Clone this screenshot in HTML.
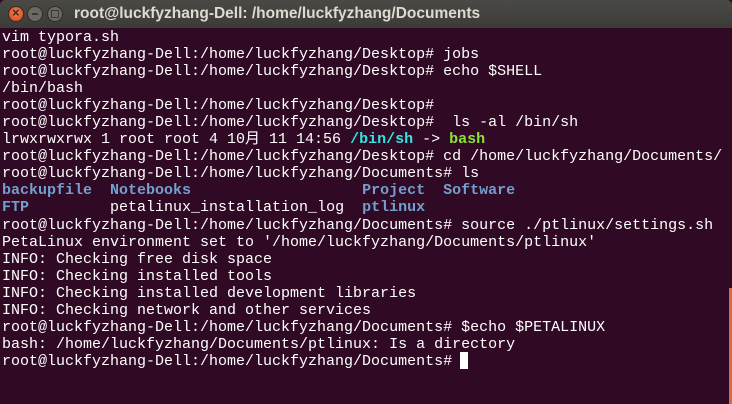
<!DOCTYPE html>
<html><head><meta charset="utf-8"><style>
html,body{margin:0;padding:0;width:732px;height:404px;overflow:hidden;background:#300a24;}
.tb{position:absolute;left:0;top:0;width:732px;height:28px;background:linear-gradient(#4a4945,#3c3b37);border-radius:5px 5px 0 0;}
.t{position:absolute;left:74px;top:5px;font:bold 15.5px "Liberation Sans",sans-serif;color:#dfdbd2;white-space:nowrap;}
.b{position:absolute;top:6px;width:16px;height:16px;border-radius:50%;box-sizing:border-box;}
.term{position:absolute;left:2px;top:29px;font:15px/17.05px "Liberation Mono","Noto Sans CJK SC",monospace;color:#ffffff;white-space:pre;margin:0;}
.d{color:#729fcf;font-weight:bold}.c{color:#34e2e2;font-weight:bold}.g{color:#8ae234;font-weight:bold}
.cur{position:absolute;left:460px;top:352px;width:8px;height:17px;background:#fff;}
.sb{position:absolute;left:729px;top:288px;width:3px;height:116px;background:#d66a41;}
</style></head><body>
<div class="tb">
<div class="b" style="left:8px;background:radial-gradient(circle at 50% 40%,#f37d52,#d4471c);border:1px solid #3a2a22"><span style="position:absolute;left:3px;top:-2px;font:bold 13px 'Liberation Sans';color:#3c2a20">×</span></div>
<div class="b" style="left:27px;background:#6a6964;border:1px solid #2e2d2a"><div style="position:absolute;left:4px;top:6px;width:6px;height:2px;background:#3a3935"></div></div>
<div class="b" style="left:47px;background:#6a6964;border:1px solid #2e2d2a"><div style="position:absolute;left:3px;top:3px;width:6px;height:6px;border:1px solid #3a3935"></div></div>
<div class="t">root@luckfyzhang-Dell: /home/luckfyzhang/Documents</div>
</div>
<pre class="term">vim typora.sh
root@luckfyzhang-Dell:/home/luckfyzhang/Desktop# jobs
root@luckfyzhang-Dell:/home/luckfyzhang/Desktop# echo $SHELL
/bin/bash
root@luckfyzhang-Dell:/home/luckfyzhang/Desktop#
root@luckfyzhang-Dell:/home/luckfyzhang/Desktop#  ls -al /bin/sh
lrwxrwxrwx 1 root root 4 10月 11 14:56 <span class="c">/bin/sh</span> -&gt; <span class="g">bash</span>
root@luckfyzhang-Dell:/home/luckfyzhang/Desktop# cd /home/luckfyzhang/Documents/
root@luckfyzhang-Dell:/home/luckfyzhang/Documents# ls
<span class="d">backupfile</span>  <span class="d">Notebooks</span>                   <span class="d">Project</span>  <span class="d">Software</span>
<span class="d">FTP</span>         petalinux_installation_log  <span class="d">ptlinux</span>
root@luckfyzhang-Dell:/home/luckfyzhang/Documents# source ./ptlinux/settings.sh
PetaLinux environment set to '/home/luckfyzhang/Documents/ptlinux'
INFO: Checking free disk space
INFO: Checking installed tools
INFO: Checking installed development libraries
INFO: Checking network and other services
root@luckfyzhang-Dell:/home/luckfyzhang/Documents# $echo $PETALINUX
bash: /home/luckfyzhang/Documents/ptlinux: Is a directory
root@luckfyzhang-Dell:/home/luckfyzhang/Documents# </pre>
<div class="cur"></div>
<div class="sb"></div>
</body></html>
